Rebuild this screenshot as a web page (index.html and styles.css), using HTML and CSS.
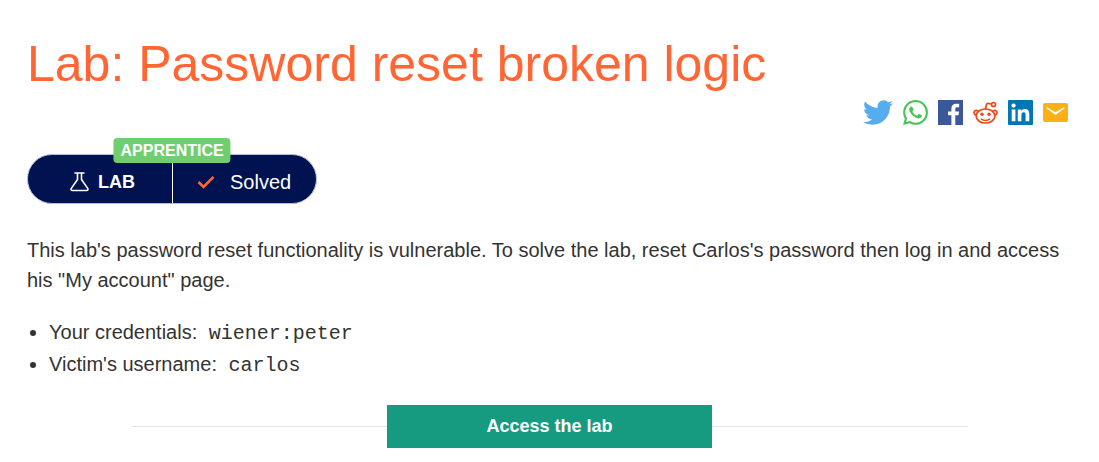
FILE: index.html
```html
<!DOCTYPE html>
<html lang="en">
<head>
<meta charset="utf-8">
<meta name="viewport" content="width=device-width, initial-scale=1">
<title>Lab: Password reset broken logic</title>
<link rel="stylesheet" href="styles.css">
</head>
<body>
<main class="page">
  <h1 class="title">Lab: Password reset broken logic</h1>

  <nav class="share" aria-label="Share">
    <a class="share-link share-link-wide" href="#" aria-label="Twitter">
      <svg viewBox="0 2 24 20" preserveAspectRatio="none" fill="#55acee"><path d="M23.953 4.57a10 10 0 01-2.825.775 4.958 4.958 0 002.163-2.723c-.951.555-2.005.959-3.127 1.184a4.92 4.92 0 00-8.384 4.482C7.69 8.095 4.067 6.13 1.64 3.162a4.822 4.822 0 00-.666 2.475c0 1.71.87 3.213 2.188 4.096a4.904 4.904 0 01-2.228-.616v.06a4.923 4.923 0 003.946 4.827 4.996 4.996 0 01-2.212.085 4.936 4.936 0 004.604 3.417 9.867 9.867 0 01-6.102 2.105c-.39 0-.779-.023-1.17-.067a13.995 13.995 0 007.557 2.209c9.053 0 13.998-7.496 13.998-13.985 0-.21 0-.42-.015-.63A9.935 9.935 0 0024 4.59z"/></svg>
    </a>
    <a class="share-link" href="#" aria-label="WhatsApp">
      <svg viewBox="0 0 24 24" fill="#43c553"><path d="M17.472 14.382c-.297-.149-1.758-.867-2.03-.967-.273-.099-.471-.148-.67.15-.197.297-.767.966-.94 1.164-.173.199-.347.223-.644.075-.297-.15-1.255-.463-2.39-1.475-.883-.788-1.48-1.761-1.653-2.059-.173-.297-.018-.458.13-.606.134-.133.298-.347.446-.52.149-.174.198-.298.298-.497.099-.198.05-.371-.025-.52-.075-.149-.669-1.612-.916-2.207-.242-.579-.487-.5-.669-.51-.173-.008-.371-.01-.57-.01-.198 0-.52.074-.792.372-.272.297-1.04 1.016-1.04 2.479 0 1.462 1.065 2.875 1.213 3.074.149.198 2.096 3.2 5.077 4.487.709.306 1.262.489 1.694.625.712.227 1.36.195 1.871.118.571-.085 1.758-.719 2.006-1.413.248-.694.248-1.289.173-1.413-.074-.124-.272-.198-.57-.347m-5.421 7.403h-.004a9.87 9.87 0 01-5.031-1.378l-.361-.214-3.741.982.998-3.648-.235-.374a9.86 9.86 0 01-1.51-5.26c.001-5.45 4.436-9.884 9.888-9.884 2.64 0 5.122 1.03 6.988 2.898a9.825 9.825 0 012.893 6.994c-.003 5.45-4.437 9.884-9.885 9.884m8.413-18.297A11.815 11.815 0 0012.05 0C5.495 0 .16 5.335.157 11.892c0 2.096.547 4.142 1.588 5.945L.057 24l6.305-1.654a11.882 11.882 0 005.683 1.448h.005c6.554 0 11.89-5.335 11.893-11.893a11.821 11.821 0 00-3.48-8.413z"/></svg>
    </a>
    <a class="share-link" href="#" aria-label="Facebook">
      <svg viewBox="0 0 24 24" fill="#3b5998"><path d="M0 0h24v24h-7.400v-9.300h3.100l.5-3.600h-3.600V8.800c0-1.050.3-1.800 1.800-1.800h1.900V3.800c-.3-.04-1.470-.14-2.800-.14-2.760 0-4.650 1.680-4.650 4.780v2.660H9.700v3.600h3.150V24H0z"/></svg>
    </a>
    <a class="share-link" href="#" aria-label="Reddit">
      <svg viewBox="0 0 25 25" fill="none" stroke="#ef4a1b" stroke-width="1.700" stroke-linecap="round" stroke-linejoin="round"><ellipse cx="12.500" cy="16" rx="9.400" ry="7"/><path d="M5 11.200C3.400 9.600 1 10.800 1 12.700c0 1.200.7 2 1.900 2.400M20 11.200c1.600-1.600 4-.4 4 1.500 0 1.200-.7 2-1.900 2.400M12.500 9l1-4.500c.2-.8.700-1.200 1.500-1.100l3.400.6M8.500 19.200c2.200 1.700 5.800 1.700 8 0"/><circle cx="20.500" cy="4.500" r="2"/><circle cx="9" cy="14.300" r="1.700" fill="#ef4a1b" stroke="none"/><circle cx="16" cy="14.300" r="1.700" fill="#ef4a1b" stroke="none"/></svg>
    </a>
    <a class="share-link" href="#" aria-label="LinkedIn">
      <svg viewBox="0 0 24 24" fill="#0077b5"><path d="M20.447 20.452h-3.554v-5.569c0-1.328-.027-3.037-1.852-3.037-1.853 0-2.136 1.445-2.136 2.939v5.667H9.351V9h3.414v1.561h.046c.477-.9 1.637-1.850 3.370-1.850 3.601 0 4.267 2.370 4.267 5.455v6.286zM5.337 7.433a2.062 2.062 0 01-2.063-2.065 2.064 2.064 0 112.063 2.065zm1.782 13.019H3.555V9h3.564v11.452zM22.800 0H1.200C.5 0 0 .5 0 1.200v21.600c0 .7.5 1.200 1.200 1.200h21.600c.7 0 1.200-.5 1.200-1.200V1.200C24 .5 23.500 0 22.800 0z"/></svg>
    </a>
    <a class="share-link" href="#" aria-label="Email">
      <svg viewBox="0 0 25 25"><rect y="3" width="25" height="19" rx="2" fill="#fbb116"/><path d="M4 7.200l8.500 5L21 7.200 21.500 8.300 12.500 15 3.500 8.300z" fill="#fff"/></svg>
    </a>
  </nav>

  <div class="status">
    <span class="level">APPRENTICE</span>
    <div class="status-part status-type">
      <svg class="flask" viewBox="0 0 20 20" fill="none" stroke="#fff" stroke-width="1.600" stroke-linecap="round" stroke-linejoin="round"><path d="M5 1h9M7.500 1v6.500L1.300 16.400c-.7 1.200-.1 2.100 1.200 2.100h14c1.300 0 1.900-.9 1.200-2.100L11.500 7.500V1"/></svg>
      <span>LAB</span>
    </div>
    <div class="status-part status-result">
      <svg class="tick" viewBox="0 0 18 14" fill="none" stroke="#ff6633" stroke-width="2.600"><path d="M1.500 7l5 5L16.500 1.800"/></svg>
      <span>Solved</span>
    </div>
  </div>

  <p class="intro">This lab's password reset functionality is vulnerable. To solve the lab, reset Carlos's password then log in and access his "My account" page.</p>

  <ul class="facts">
    <li>Your credentials: <code>wiener:peter</code></li>
    <li>Victim's username: <code>carlos</code></li>
  </ul>

  <div class="launch">
    <a class="launch-button" href="#">Access the lab</a>
  </div>
</main>
</body>
</html>
```
FILE: styles.css
```css
* {
  box-sizing: border-box;
}

body {
  margin: 0;
  background: #fff;
  color: #333332;
  font-family: "Liberation Sans", Arial, sans-serif;
  font-size: 20px;
  line-height: 30px;
}

.page {
  padding: 32px 27px 14px;
}

.title {
  margin: 0;
  color: #ff6633;
  font-size: 50px;
  font-weight: 400;
  line-height: 64px;
}

.share {
  display: flex;
  justify-content: flex-end;
  gap: 10px;
  margin-top: 4px;
  padding-right: 4px;
}

.share-link {
  width: 25px;
  height: 25px;
}

.share-link-wide {
  width: 30px;
}

.share-link svg {
  display: block;
  width: 100%;
  height: 100%;
}

.status {
  position: relative;
  display: flex;
  width: max-content;
  margin-top: 29px;
  border: 1px solid #b6bdd6;
  border-radius: 25px;
  background: #00124f;
  color: #fff;
}

.status-part {
  display: flex;
  align-items: center;
  height: 48px;
  padding-top: 6px;
}

.status-type {
  gap: 8px;
  padding-right: 37px;
  padding-left: 42px;
  border-right: 1px solid #fff;
  font-size: 18px;
  font-weight: 700;
}

.status-result {
  gap: 15px;
  padding-right: 25px;
  padding-left: 24px;
}

.level {
  position: absolute;
  top: -17px;
  left: 50%;
  transform: translateX(-50%);
  padding: 0 7px;
  border-radius: 4px;
  background: #6fcf6f;
  font-size: 16px;
  font-weight: 700;
  line-height: 25px;
}

.flask {
  width: 20px;
  height: 20px;
}

.tick {
  width: 18px;
  height: 14px;
}

.intro {
  margin: 31px 0 0;
}

.facts {
  margin: 21px 0 0;
  padding-left: 22px;
  line-height: 32px;
}

.facts code {
  margin-left: 6px;
  font-family: "Liberation Mono", "Courier New", monospace;
  font-size: 20px;
  line-height: 20px;
}

.launch {
  display: flex;
  align-items: center;
  width: 80%;
  margin: 25px auto 0;
}

.launch::before,
.launch::after {
  content: "";
  flex: 1;
  height: 1px;
  background: #e4e4e4;
}

.launch-button {
  width: 325px;
  background: #179b80;
  color: #fff;
  font-size: 18px;
  font-weight: 700;
  line-height: 43px;
  text-align: center;
  text-decoration: none;
}
```
